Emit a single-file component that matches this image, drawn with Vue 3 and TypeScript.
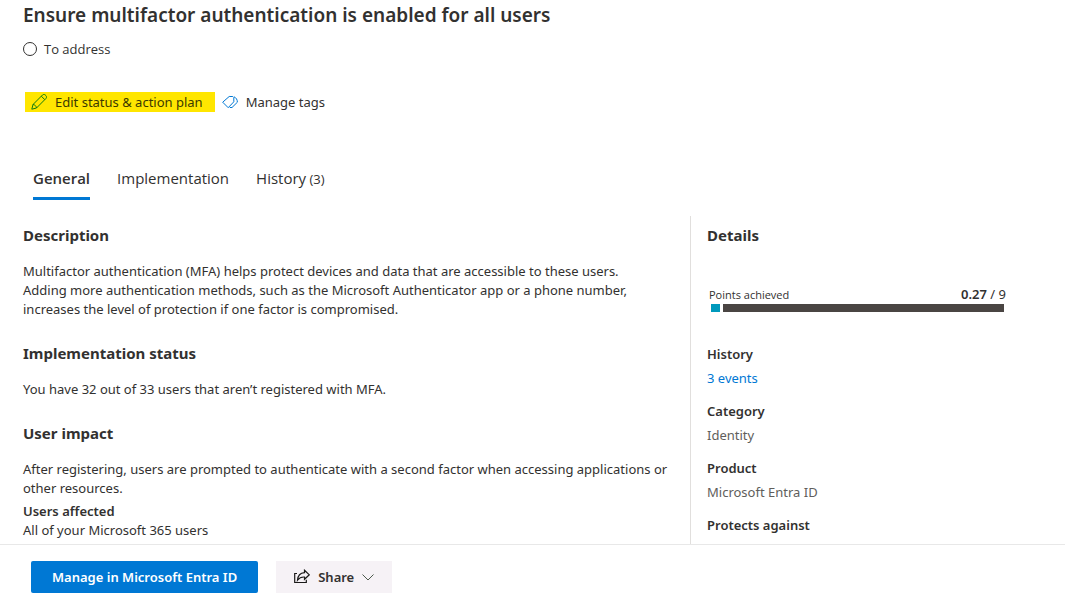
<script setup lang="ts">
import { ref } from 'vue'

interface Tab {
  id: string
  label: string
  count?: number
}

interface Fact {
  label: string
  value: string
  link?: boolean
}

const tabs: Tab[] = [
  { id: 'general', label: 'General' },
  { id: 'implementation', label: 'Implementation' },
  { id: 'history', label: 'History', count: 3 },
]
const active = ref('general')

const facts: Fact[] = [
  { label: 'History', value: '3 events', link: true },
  { label: 'Category', value: 'Identity' },
  { label: 'Product', value: 'Microsoft Entra ID' },
  { label: 'Protects against', value: '' },
]

const achieved = 0.27
const total = 9
const share = `${(achieved / total) * 100}%`
</script>

<template>
  <div class="panel">
    <div class="content">
      <header class="header">
        <h1>Ensure multifactor authentication is enabled for all users</h1>
        <p class="status"><span class="ring"></span>To address</p>
        <div class="commands">
          <button type="button" class="command highlighted">
            <svg class="icon" viewBox="0 0 16 16" fill="none" stroke="#107c10">
              <path d="M.8 15.200l1.200-4.700L11.600.9c.8-.7 2-.6 2.700.1l.7.7c.7.8.7 1.900 0 2.700L5.500 14z" />
              <path d="M10.300 2.200l3.500 3.500M2 10.500c1.800.1 3.300 1.600 3.500 3.500" />
            </svg>
            Edit status &amp; action plan
          </button>
          <button type="button" class="command">
            <svg class="icon" viewBox="0 0 16 16" fill="none" stroke="#0078d4" stroke-linejoin="round">
              <path d="M.7 8.200L7.200 2.500h3.600l1 1v4.300L6.200 13.700z" />
              <path d="M12 2.800c2.200 1 3.300 2.700 3.400 5.400L10 13.500H7.800" />
            </svg>
            Manage tags
          </button>
        </div>
      </header>

      <nav class="tabs" role="tablist">
        <button
          v-for="tab in tabs"
          :key="tab.id"
          type="button"
          role="tab"
          class="tab"
          :class="{ active: active === tab.id }"
          :aria-selected="active === tab.id"
          @click="active = tab.id"
        >
          {{ tab.label }}<span v-if="tab.count" class="count"> ({{ tab.count }})</span>
        </button>
      </nav>

      <div class="columns">
        <main class="main">
          <section>
            <h2>Description</h2>
            <p>
              Multifactor authentication (MFA) helps protect devices and data that are accessible to these users.<br />
              Adding more authentication methods, such as the Microsoft Authenticator app or a phone number,
              increases the level of protection if one factor is compromised.
            </p>
          </section>
          <section>
            <h2>Implementation status</h2>
            <p>You have 32 out of 33 users that aren’t registered with MFA.</p>
          </section>
          <section>
            <h2>User impact</h2>
            <p>
              After registering, users are prompted to authenticate with a second factor when accessing
              applications or other resources.
            </p>
            <h3>Users affected</h3>
            <p>All of your Microsoft 365 users</p>
          </section>
        </main>

        <aside class="details">
          <h2>Details</h2>
          <div class="points">
            <div class="points-text">
              <span class="points-label">Points achieved</span>
              <span><b>{{ achieved }}</b> / {{ total }}</span>
            </div>
            <div class="bar">
              <span class="done" :style="{ width: share }"></span>
              <span class="rest"></span>
            </div>
          </div>
          <dl>
            <div v-for="fact in facts" :key="fact.label" class="fact">
              <dt>{{ fact.label }}</dt>
              <dd v-if="fact.value">
                <a v-if="fact.link" href="#history">{{ fact.value }}</a>
                <template v-else>{{ fact.value }}</template>
              </dd>
            </div>
          </dl>
        </aside>
      </div>
    </div>

    <footer class="footer">
      <button type="button" class="primary">Manage in Microsoft Entra ID</button>
      <button type="button" class="share">
        <svg class="icon" viewBox="0 0 16 16" fill="none" stroke="#1b1a19">
          <path d="M3 4.500H.7v9h11.600v-2.700" stroke-width="1.200" />
          <path d="M10.500 1.300L15.300 5.800l-4.800 4.500V8C7.500 7.800 5.300 8.800 3.500 11.200 3.800 7.200 6.300 4 10.500 3.700z" stroke-width="1.200" />
        </svg>
        Share
        <svg class="chevron" viewBox="0 0 12 12" fill="none" stroke="#4d5a4d">
          <path d="M.5 3.500L6 9l5.500-5.500" />
        </svg>
      </button>
    </footer>
  </div>
</template>

<style>
body {
  margin: 0;
  background: #fff;
}
</style>

<style scoped>
.panel {
  display: flex;
  flex-direction: column;
  height: 100vh;
  overflow: hidden;
  color: #323130;
  font: 13px/19px "Noto Sans", "Open Sans", sans-serif;
}

h1,
h2,
h3,
p,
dl,
dd {
  margin: 0;
}

button {
  padding: 0;
  border: 0;
  background: none;
  color: inherit;
  font: inherit;
  cursor: pointer;
}

.content {
  display: flex;
  flex: 1;
  flex-direction: column;
  min-height: 0;
  overflow: hidden;
}

.header {
  padding: 1px 23px 0;
}

h1 {
  font-size: 19px;
  font-weight: 600;
  line-height: 28px;
}

.status {
  display: flex;
  align-items: center;
  gap: 7px;
  margin-top: 10px;
  font-family: "Open Sans", sans-serif;
  line-height: 20px;
}

.ring {
  box-sizing: border-box;
  width: 14px;
  height: 14px;
  border: 1px solid #323130;
  border-radius: 50%;
}

.commands {
  display: flex;
  gap: 7px;
  margin: 33px 0 0 2px;
}

.command {
  display: flex;
  align-items: center;
  gap: 8px;
  line-height: 20px;
}

.highlighted {
  padding: 0 12px 0 6px;
  background: #ffe600;
  color: #3b3a00;
}

.icon {
  width: 16px;
  height: 16px;
}

.tabs {
  display: flex;
  gap: 27px;
  margin: 45px 0 0 33px;
}

.tab {
  padding: 8px 0 6px;
  border-bottom: 3px solid transparent;
  font-family: "Open Sans", sans-serif;
  font-size: 15px;
  line-height: 26px;
}

.tab.active {
  border-color: #0078d4;
  font-weight: 600;
}

.count {
  font-size: 13px;
  line-height: 1;
}

.columns {
  display: grid;
  flex: 1;
  grid-template-columns: minmax(0, 1fr) 375px;
  margin-top: 16px;
}

.main {
  display: flex;
  flex-direction: column;
  gap: 22px;
  padding: 7px 16px 0 23px;
}

h2 {
  margin-bottom: 15px;
  font-size: 15px;
  font-weight: 700;
  line-height: 24px;
}

h3 {
  margin-top: 4px;
  font-size: 13px;
  font-weight: 600;
  line-height: 19px;
}

.details {
  padding: 7px 59px 0 16px;
  border-left: 1px solid #e1dfdd;
}

.points {
  margin: 38px 0 30px 2px;
}

.points-text {
  display: flex;
  align-items: center;
  justify-content: space-between;
  line-height: 19px;
}

.points-label {
  font-family: "Open Sans", sans-serif;
  font-size: 11px;
}

b,
dt {
  font-weight: 600;
}

.bar {
  display: flex;
  gap: 3px;
  height: 8px;
  margin: 0 2px;
}

.done {
  background: #0099bc;
}

.rest {
  flex: 1;
  background: #4a4543;
}

.fact {
  margin-bottom: 9px;
  line-height: 24px;
}

dd {
  color: #605e5c;
}

a {
  color: #0078d4;
  text-decoration: none;
}

.footer {
  display: flex;
  gap: 18px;
  padding: 16px 31px 10px;
  border-top: 1px solid #e8e8e8;
  background: #fff;
}

.primary,
.share {
  height: 32px;
  border-radius: 2px;
  font-weight: 600;
}

.primary {
  padding: 0 21px;
  background: #0078d4;
  color: #fff;
}

.share {
  display: flex;
  align-items: center;
  gap: 8px;
  padding: 0 18px;
  border-radius: 0;
  background: #f6f2f6;
}

.chevron {
  width: 12px;
  height: 12px;
}
</style>
